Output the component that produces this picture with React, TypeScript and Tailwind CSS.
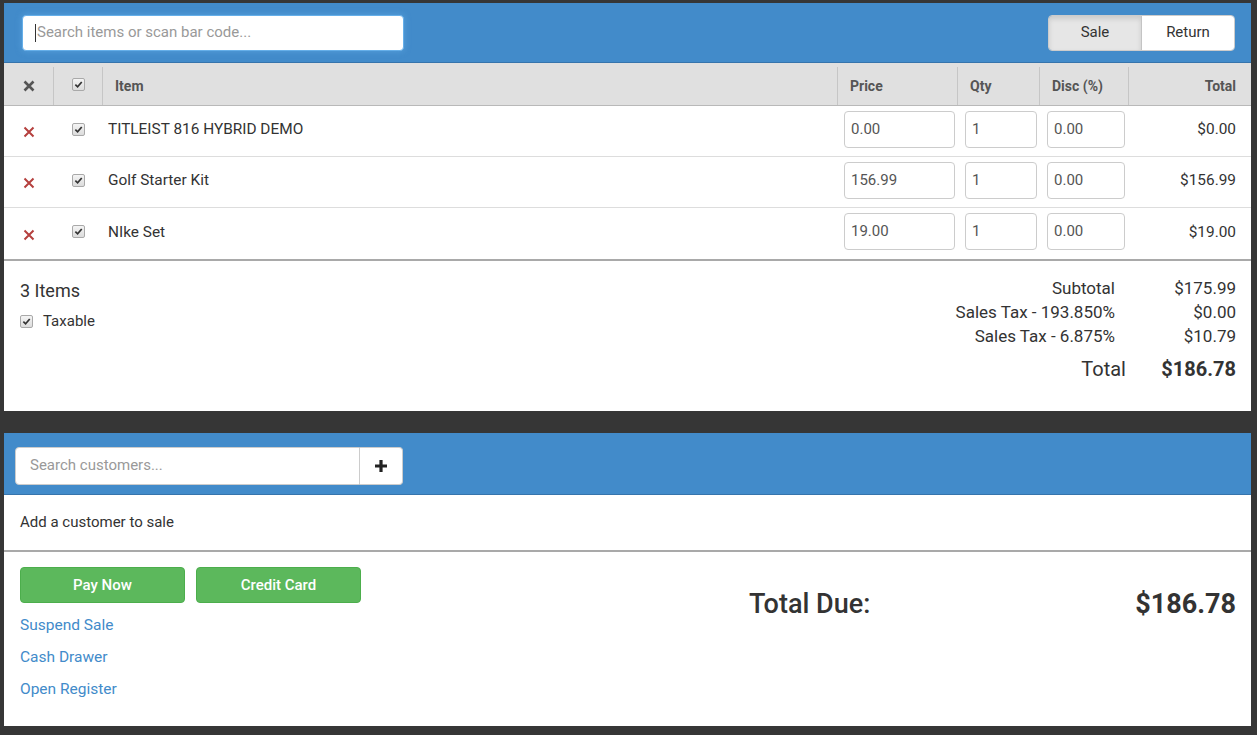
import React from 'react';

type Line = { name: string; price: string; qty: string; disc: string; total: string };

const lines: Line[] = [
  { name: 'TITLEIST 816 HYBRID DEMO', price: '0.00', qty: '1', disc: '0.00', total: '$0.00' },
  { name: 'Golf Starter Kit', price: '156.99', qty: '1', disc: '0.00', total: '$156.99' },
  { name: 'NIke Set', price: '19.00', qty: '1', disc: '0.00', total: '$19.00' },
];

const Check = () => (
  <span className="inline-flex h-[13px] w-[13px] items-center justify-center rounded-[2px] border border-[#a9a9a9] bg-gradient-to-b from-[#f4f4f4] to-[#dcdcdc]">
    <svg viewBox="0 0 10 10" className="h-[9px] w-[9px]">
      <path d="M1.5 5.2 L4 7.6 L8.6 2.2" fill="none" stroke="#333" strokeWidth="1.9" />
    </svg>
  </span>
);

const RedX = () => (
  <svg viewBox="0 0 12 12" className="h-[12px] w-[12px]">
    <path d="M1.5 1.5 L10.5 10.5 M10.5 1.5 L1.5 10.5" stroke="#b5403e" strokeWidth="2" />
  </svg>
);

const Cell = ({ value, w }: { value: string; w: string }) => (
  <div className={`${w} flex h-[37px] items-center rounded-[4px] border border-[#cccccc] bg-white px-[6px] text-[15px] text-[#555]`}>
    {value}
  </div>
);

export default function App() {
  return (
    <div className="h-[735px] w-[1257px] overflow-hidden bg-[#363636] pl-[4px] pt-[3px] font-['Roboto',sans-serif] text-[#333]">
      {/* cart panel */}
      <div className="w-[1247px] bg-white">
        <div className="flex h-[60px] items-center justify-between border-b border-[#3674ac] bg-[#428bca] pl-[18px] pr-[16px]">
          <div className="flex h-[36px] w-[382px] items-center rounded-[4px] border border-[#66afe9] bg-white px-[12px] text-[15px] text-[#999] shadow-[0_0_6px_rgba(102,175,233,0.6)]">
            <span className="mr-[1px] h-[18px] w-px bg-[#333]" />
            Search items or scan bar code...
          </div>
          <div className="flex h-[36px] overflow-hidden rounded-[4px] border border-[#cccccc] text-[15px]">
            <div className="flex w-[93px] items-center justify-center border-r border-[#c4c4c4] bg-[#e6e6e6] shadow-[inset_0_3px_5px_rgba(0,0,0,0.12)]">Sale</div>
            <div className="flex w-[92px] items-center justify-center bg-white">Return</div>
          </div>
        </div>

        <div className="flex h-[43px] items-center border-b border-[#b9b9b9] bg-[#e0e0e0] pt-[4px] text-[14px] font-bold text-[#555]">
          <div className="flex h-full w-[50px] items-center justify-center border-r border-[#c6c6c6]">
            <svg viewBox="0 0 12 12" className="h-[12px] w-[12px]">
              <path d="M1.5 1.5 L10.5 10.5 M10.5 1.5 L1.5 10.5" stroke="#555" strokeWidth="2.6" />
            </svg>
          </div>
          <div className="flex h-full w-[49px] items-center justify-center border-r border-[#c6c6c6] pb-[4px]">
            <Check />
          </div>
          <div className="flex h-full w-[735px] items-center border-r border-[#c6c6c6] pl-[12px]">Item</div>
          <div className="flex h-full w-[120px] items-center border-r border-[#c6c6c6] pl-[12px]">Price</div>
          <div className="flex h-full w-[82px] items-center border-r border-[#c6c6c6] pl-[12px]">Qty</div>
          <div className="flex h-full w-[89px] items-center border-r border-[#c6c6c6] pl-[12px]">Disc (%)</div>
          <div className="flex h-full flex-1 items-center justify-end pr-[15px]">Total</div>
        </div>

        {lines.map((l, i) => (
          <div
            key={l.name}
            className={`flex h-[51px] items-center pb-[4px] text-[15.4px] ${i < lines.length - 1 ? 'border-b border-[#dddddd]' : ''}`}
          >
            <div className="flex w-[50px] justify-center pt-[6px]"><RedX /></div>
            <div className="flex w-[49px] justify-center"><Check /></div>
            <div className="w-[735px] pl-[5px] pt-[2px]">{l.name}</div>
            <div className="w-[120px] pl-[6px]"><Cell value={l.price} w="w-[111px]" /></div>
            <div className="w-[82px] pl-[7px]"><Cell value={l.qty} w="w-[72px]" /></div>
            <div className="w-[89px] pl-[7px]"><Cell value={l.disc} w="w-[78px]" /></div>
            <div className="flex-1 pr-[15px] pt-[2px] text-right">{l.total}</div>
          </div>
        ))}

        <div className="flex h-[152px] justify-between border-t-2 border-[#a9a9a9] pl-[16px] pr-[15px] pt-[18px]">
          <div>
            <div className="text-[18px] leading-[24px]">3 Items</div>
            <div className="mt-[7px] flex items-center gap-[10px] text-[15px]">
              <Check />
              Taxable
            </div>
          </div>
          <div className="-mt-[3px] text-[17px] leading-[24px]">
            <div className="flex justify-end"><span>Subtotal</span><span className="w-[121px] text-right">$175.99</span></div>
            <div className="flex justify-end"><span>Sales Tax - 193.850%</span><span className="w-[121px] text-right">$0.00</span></div>
            <div className="flex justify-end"><span>Sales Tax - 6.875%</span><span className="w-[121px] text-right">$10.79</span></div>
            <div className="mt-[8px] flex items-center justify-end text-[20px] leading-[26px]">
              <span>Total</span>
              <span className="w-[110px] text-right font-bold">$186.78</span>
            </div>
          </div>
        </div>
      </div>

      {/* customer + payment panel */}
      <div className="mt-[22px] h-[293px] w-[1247px] bg-white">
        <div className="flex h-[62px] items-center border-b border-[#3674ac] bg-[#428bca] pl-[11px] pt-[4px]">
          <div className="flex h-[38px] w-[345px] items-center rounded-l-[4px] border border-[#cccccc] bg-white px-[14px] text-[15px] text-[#999]">
            Search customers...
          </div>
          <div className="flex h-[38px] w-[43px] items-center justify-center rounded-r-[4px] border border-l-0 border-[#cccccc] bg-white">
            <svg viewBox="0 0 14 14" className="h-[14px] w-[14px]">
              <path d="M7 1 V13 M1 7 H13" stroke="#222" strokeWidth="3.2" />
            </svg>
          </div>
        </div>
        <div className="flex h-[57px] items-center border-b-2 border-[#a9a9a9] pl-[16px] text-[15px]">
          Add a customer to sale
        </div>
        <div className="flex justify-between pl-[16px] pr-[15px] pt-[15px]">
          <div>
            <div className="flex gap-[11px]">
              <div className="flex h-[36px] w-[165px] items-center justify-center rounded-[4px] border border-[#4cae4c] bg-[#5cb85c] text-[15px] font-medium text-white">Pay Now</div>
              <div className="flex h-[36px] w-[165px] items-center justify-center rounded-[4px] border border-[#4cae4c] bg-[#5cb85c] text-[15px] font-medium text-white">Credit Card</div>
            </div>
            <div className="mt-[11px] flex flex-col gap-[10px] text-[15.5px] leading-[22px] text-[#428bca]">
              <span>Suspend Sale</span>
              <span>Cash Drawer</span>
              <span>Open Register</span>
            </div>
          </div>
          <div className="flex w-[487px] items-start justify-between pt-[21px] text-[27px] leading-[32px]">
            <span className="font-medium">Total Due:</span>
            <span className="font-bold">$186.78</span>
          </div>
        </div>
      </div>
    </div>
  );
}
